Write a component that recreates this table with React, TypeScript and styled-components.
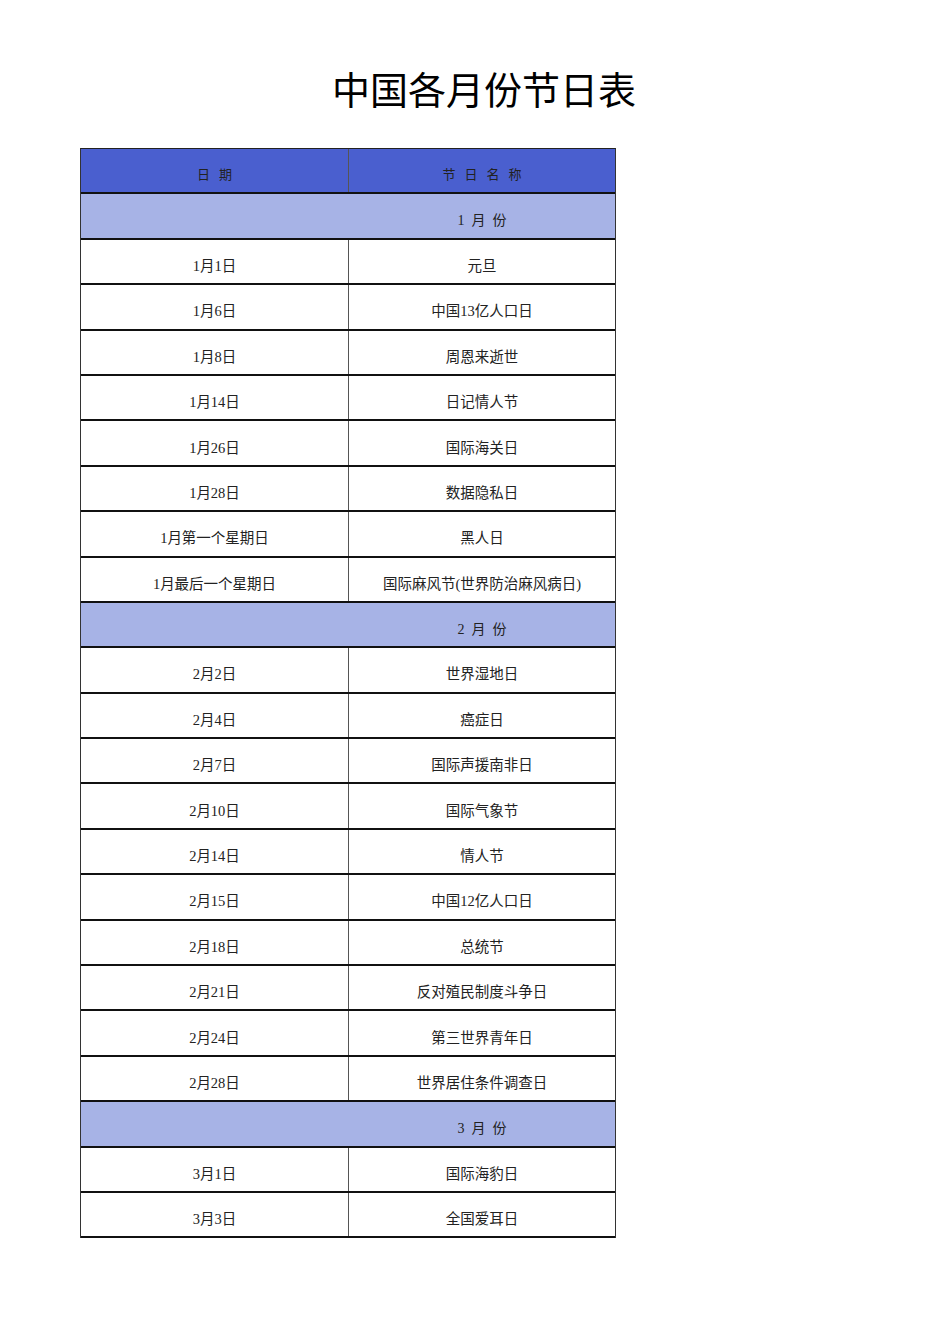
import styled, { createGlobalStyle } from "styled-components";

type Row = { kind: "month"; label: string } | { kind: "day"; date: string; name: string };

const rows: Row[] = [
  { kind: "month", label: "1 月 份" },
  { kind: "day", date: "1月1日", name: "元旦" },
  { kind: "day", date: "1月6日", name: "中国13亿人口日" },
  { kind: "day", date: "1月8日", name: "周恩来逝世" },
  { kind: "day", date: "1月14日", name: "日记情人节" },
  { kind: "day", date: "1月26日", name: "国际海关日" },
  { kind: "day", date: "1月28日", name: "数据隐私日" },
  { kind: "day", date: "1月第一个星期日", name: "黑人日" },
  { kind: "day", date: "1月最后一个星期日", name: "国际麻风节(世界防治麻风病日)" },
  { kind: "month", label: "2 月 份" },
  { kind: "day", date: "2月2日", name: "世界湿地日" },
  { kind: "day", date: "2月4日", name: "癌症日" },
  { kind: "day", date: "2月7日", name: "国际声援南非日" },
  { kind: "day", date: "2月10日", name: "国际气象节" },
  { kind: "day", date: "2月14日", name: "情人节" },
  { kind: "day", date: "2月15日", name: "中国12亿人口日" },
  { kind: "day", date: "2月18日", name: "总统节" },
  { kind: "day", date: "2月21日", name: "反对殖民制度斗争日" },
  { kind: "day", date: "2月24日", name: "第三世界青年日" },
  { kind: "day", date: "2月28日", name: "世界居住条件调查日" },
  { kind: "month", label: "3 月 份" },
  { kind: "day", date: "3月1日", name: "国际海豹日" },
  { kind: "day", date: "3月3日", name: "全国爱耳日" },
];

const GlobalStyle = createGlobalStyle`
  body {
    margin: 0;
    background: #ffffff;
    font-family: "Liberation Serif", "Noto Sans CJK SC", serif;
    color: #111;
  }
`;

const Page = styled.div`
  padding: 68px 0 100px 80px;
`;

const Title = styled.h1`
  margin: 0 0 34px 252px;
  font-size: 38px;
  font-weight: 400;
  line-height: 46px;
  color: #000;
`;

const Table = styled.div`
  width: 536px;
  box-sizing: border-box;
  border-top: 1px solid #222;
  border-left: 1px solid #333;
  border-right: 1px solid #333;
`;

const Line = styled.div<{ $bg: string }>`
  display: grid;
  grid-template-columns: 268px 1fr;
  height: 45.4px;
  box-sizing: border-box;
  background: ${(p) => p.$bg};
  border-bottom: 2px solid #111;
`;

const Cell = styled.div<{ $divider?: boolean; $spacing?: number; $size?: number }>`
  display: flex;
  align-items: center;
  justify-content: center;
  padding-top: 6px;
  padding-left: ${(p) => p.$spacing ?? 0}px;
  box-sizing: border-box;
  font-size: ${(p) => p.$size ?? 14.5}px;
  letter-spacing: ${(p) => p.$spacing ?? 0}px;
  color: #222;
  white-space: nowrap;
  border-right: ${(p) => (p.$divider ? "1px solid #555" : "none")};
`;

export default function App() {
  return (
    <>
      <GlobalStyle />
      <Page>
        <Title>中国各月份节日表</Title>
        <Table>
          <Line $bg="#4a5fcf">
            <Cell $divider $spacing={9} $size={13}>
              日期
            </Cell>
            <Cell $spacing={9} $size={13}>
              节日名称
            </Cell>
          </Line>
          {rows.map((r, i) =>
            r.kind === "month" ? (
              <Line key={i} $bg="#a7b3e6">
                <Cell />
                <Cell $size={14}>{r.label.split(" ").join("\u2002")}</Cell>
              </Line>
            ) : (
              <Line key={i} $bg="#ffffff">
                <Cell $divider>{r.date}</Cell>
                <Cell>{r.name}</Cell>
              </Line>
            )
          )}
        </Table>
      </Page>
    </>
  );
}
